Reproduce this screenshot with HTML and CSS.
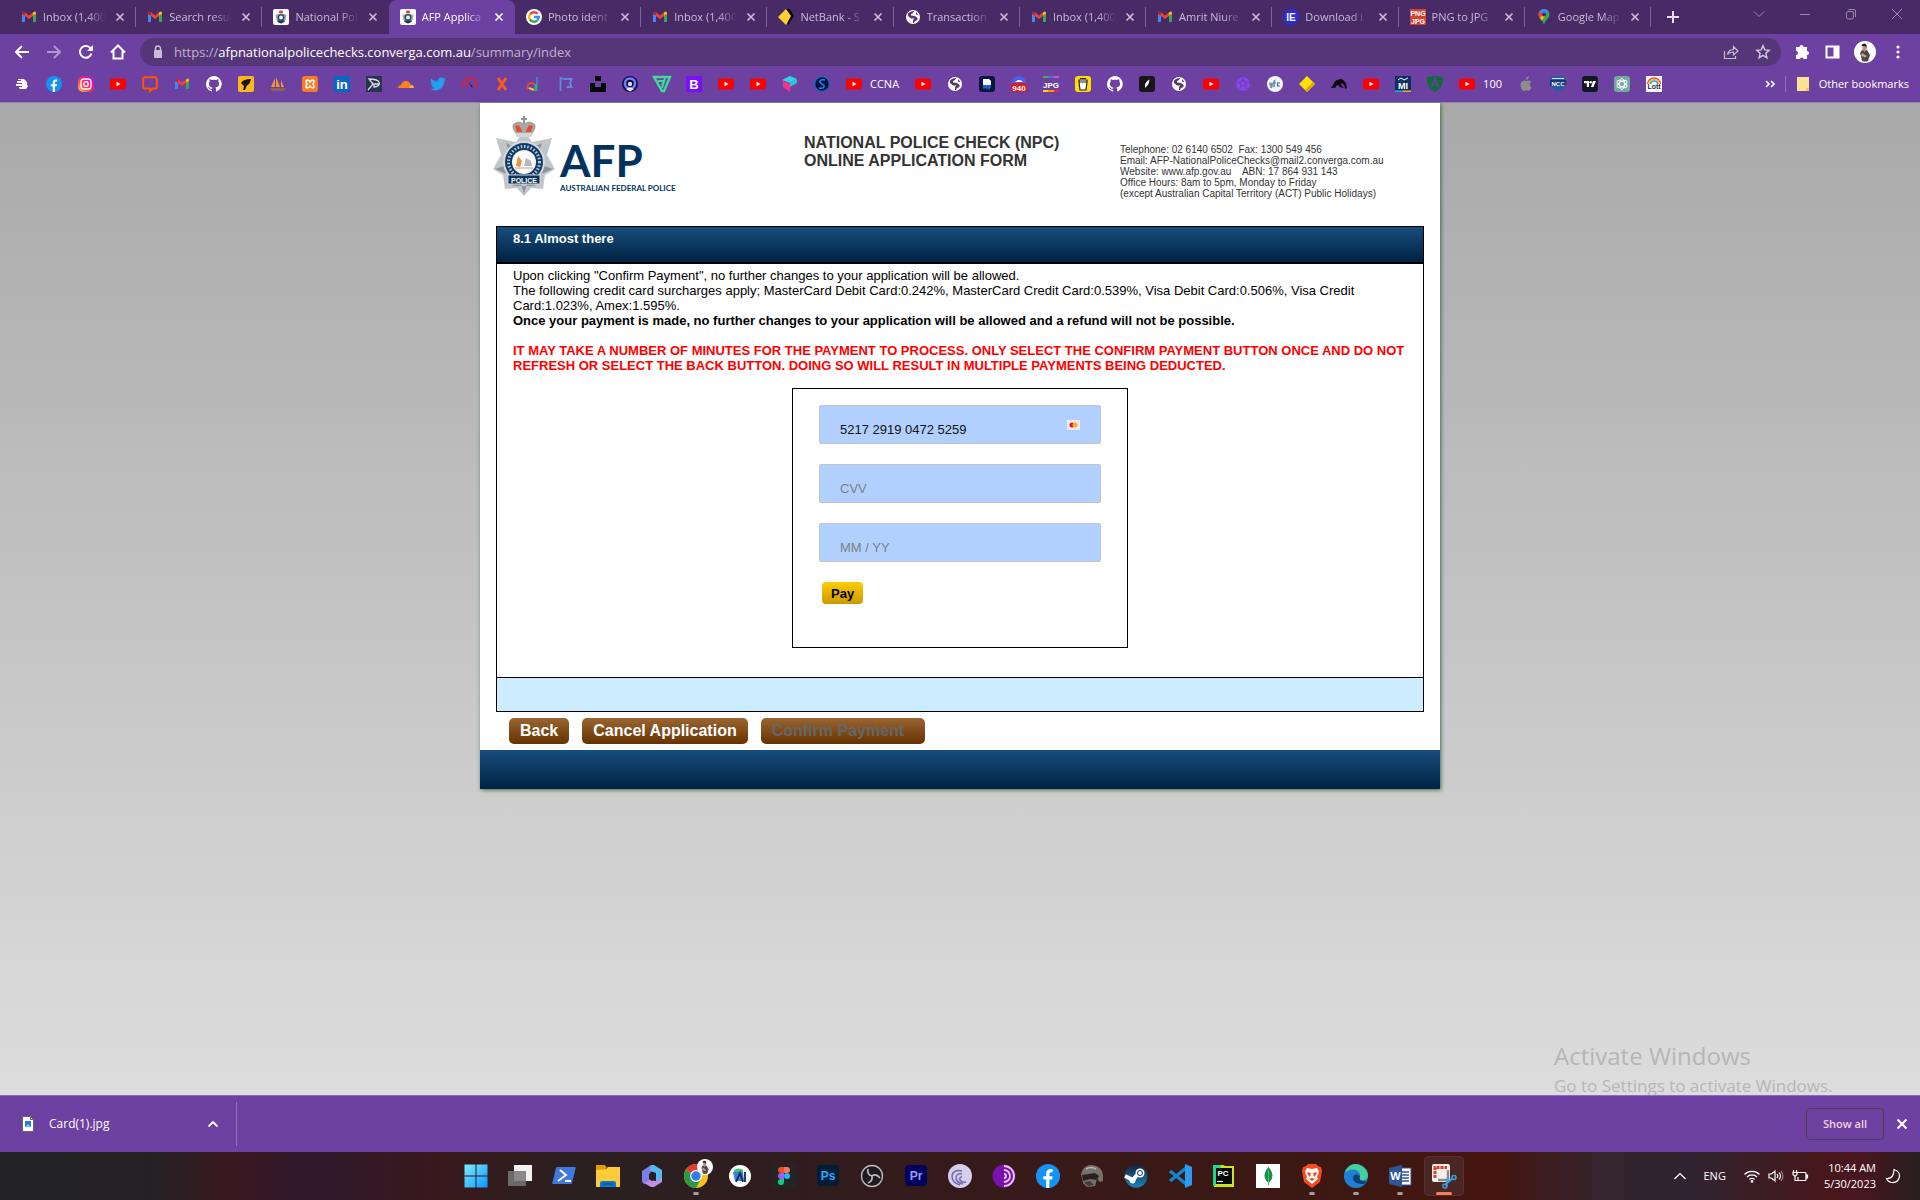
FILE: index.html
```html
<!DOCTYPE html>
<html lang="en">
<head>
<meta charset="utf-8">
<title>AFP Application Form</title>
<link rel="stylesheet" href="styles.css">
</head>
<body>
<svg class="defs" aria-hidden="true">
  <symbol id="gmail" viewBox="0 0 16 16"><path d="M1 4v9h3V6z" fill="#4285f4"/><path d="M15 4v9h-3V6z" fill="#34a853"/><path d="M12 6.500V3.500l1-.8q2-.9 2 1.300v1z" fill="#fbbc04"/><path d="M4 6.500V3.500l-1-.8q-2-.9-2 1.300v1z" fill="#c5221f"/><path d="M4 3.300l4 3.100 4-3.100v3.800l-4 3-4-3z" fill="#ea4335"/></symbol>
  <symbol id="youtube" viewBox="0 0 16 16"><rect y="2.500" width="16" height="11" rx="2" fill="#f00"/><path d="M6.500 5.700v4.600l4-2.300z" fill="#fff"/></symbol>
  <symbol id="github" viewBox="0 0 16 16"><path fill="#fff" d="M8 0a8 8 0 0 0-2.500 15.600c.4.100.5-.2.500-.4v-1.500c-2.200.5-2.700-.9-2.700-.9-.4-.9-.9-1.200-.9-1.200-.7-.5.100-.5.100-.5.800.100 1.200.8 1.200.8.700 1.200 1.900.9 2.300.7.100-.5.300-.9.500-1.100-1.800-.2-3.600-.9-3.600-4 0-.9.300-1.600.8-2.100-.1-.2-.4-1 .1-2.100 0 0 .7-.2 2.200.8a7.500 7.500 0 0 1 4 0c1.500-1 2.200-.8 2.200-.8.400 1.100.200 1.900.100 2.100.5.600.8 1.300.8 2.100 0 3.100-1.900 3.700-3.700 3.900.3.300.6.800.6 1.500v2.200c0 .200.100.500.500.400A8 8 0 0 0 8 0z"/></symbol>
  <symbol id="globe" viewBox="0 0 16 16"><circle cx="8" cy="8" r="7" fill="#fff"/><path d="M3 4.500q3-3 6-2.500l-1 2-2 1v1.500l4 .5 2.500 2v2L10 12l-1 2H8v-3l1.500-1.500H6L3 7zM11 3l2.500 3-2.500-.5z" fill="#55367a"/></symbol>
  <symbol id="crest" viewBox="0 0 16 16"><rect width="16" height="16" rx="2" fill="#fff"/><path d="M2.500 6l2.500-1h6l2.500 1-1 5L11 13H5l-1.500-2z" fill="#9aa3aa"/><rect x="6" y="1.500" width="4" height="3" rx="1" fill="#c55244"/><circle cx="8" cy="8.500" r="3.300" fill="#24456c"/><circle cx="8" cy="8.500" r="2" fill="#eee"/><path d="M4.500 11.500h7v1.500l-3.500 1.500L4.500 13z" fill="#1b3555"/></symbol>
  <symbol id="x" viewBox="0 0 16 16"><path d="M4.500 4.500l7 7m0-7l-7 7" stroke="currentColor" stroke-width="1.700" fill="none"/></symbol>
  <symbol id="facebook" viewBox="0 0 24 24"><circle cx="12" cy="12" r="12" fill="#1593f5"/><path d="M10.200 24v-8.500H7.300v-3.300h2.900V9.600c0-3 1.700-4.500 4.300-4.500 1 0 2.200.2 2.200.2v2.900h-1.400c-1.400 0-1.900.8-1.900 1.700v2.300h3.200l-.5 3.300h-2.700V24z" fill="#fff"/></symbol>
  <symbol id="avatar" viewBox="0 0 22 22"><circle cx="11" cy="11" r="11" fill="#fff"/><path d="M8 9l5 0 3 5-2 6q-3 1-6 0l-1-5-1-3z" fill="#4e4848"/><path d="M8.500 5h4v4l-2 2-2-2z" fill="#c48c7c"/><path d="M7.500 4q3-3 5 0v3l-1.500-2H8z" fill="#1b1718"/><path d="M8 12l5 3-2 1.500-4-2z" fill="#d39d8c"/></symbol>
</svg>

<header class="browser">
  <div class="tabstrip">
    <div class="tabs" role="tablist">
      <div class="tab" role="tab"><svg class="i16"><use href="#gmail"/></svg><span>Inbox (1,400</span><button aria-label="Close"><svg class="i16"><use href="#x"/></svg></button></div>
      <div class="tab" role="tab"><svg class="i16"><use href="#gmail"/></svg><span>Search resul</span><button aria-label="Close"><svg class="i16"><use href="#x"/></svg></button></div>
      <div class="tab before" role="tab"><svg class="i16"><use href="#crest"/></svg><span>National Pol</span><button aria-label="Close"><svg class="i16"><use href="#x"/></svg></button></div>
      <div class="tab active" role="tab" aria-selected="true"><svg class="i16"><use href="#crest"/></svg><span>AFP Applica</span><button aria-label="Close"><svg class="i16"><use href="#x"/></svg></button></div>
      <div class="tab" role="tab"><svg class="i16" viewBox="0 0 16 16"><circle cx="8" cy="8" r="8" fill="#fff"/><g fill="none" stroke-width="2.400"><path d="M4 5.500A4.700 4.700 0 0 1 11.500 4.700" stroke="#ea4335"/><path d="M4 5.400a4.700 4.700 0 0 0 0 5.200" stroke="#fbbc04"/><path d="M4 10.500a4.700 4.700 0 0 0 7.300 .8" stroke="#34a853"/><path d="M11.300 11.300A4.700 4.700 0 0 0 12.700 8H8" stroke="#4285f4"/></g></svg><span>Photo ident</span><button aria-label="Close"><svg class="i16"><use href="#x"/></svg></button></div>
      <div class="tab" role="tab"><svg class="i16"><use href="#gmail"/></svg><span>Inbox (1,400</span><button aria-label="Close"><svg class="i16"><use href="#x"/></svg></button></div>
      <div class="tab" role="tab"><svg class="i16" viewBox="0 0 16 16"><path d="M8 0l4 0 4 7-6 9z" fill="#0a0a0a"/><path d="M8 0l5 7-5 9-8-8z" fill="#fdcf2f"/></svg><span>NetBank - S</span><button aria-label="Close"><svg class="i16"><use href="#x"/></svg></button></div>
      <div class="tab" role="tab"><svg class="i16"><use href="#globe"/></svg><span>Transaction</span><button aria-label="Close"><svg class="i16"><use href="#x"/></svg></button></div>
      <div class="tab" role="tab"><svg class="i16"><use href="#gmail"/></svg><span>Inbox (1,400</span><button aria-label="Close"><svg class="i16"><use href="#x"/></svg></button></div>
      <div class="tab" role="tab"><svg class="i16"><use href="#gmail"/></svg><span>Amrit Niure</span><button aria-label="Close"><svg class="i16"><use href="#x"/></svg></button></div>
      <div class="tab" role="tab"><svg class="i16" viewBox="0 0 16 16"><circle cx="8" cy="8" r="8" fill="#2a2bd0"/><text x="8" y="12" text-anchor="middle" class="glyph" font-size="10" fill="#fff">IE</text></svg><span>Download i</span><button aria-label="Close"><svg class="i16"><use href="#x"/></svg></button></div>
      <div class="tab" role="tab"><svg class="i16" viewBox="0 0 16 16"><rect width="16" height="16" fill="#d3412f"/><text x="8" y="7" text-anchor="middle" class="glyph" font-size="7" fill="#fff">PNG</text><text x="8" y="15" text-anchor="middle" class="glyph" font-size="7" fill="#fff">JPG</text></svg><span>PNG to JPG</span><button aria-label="Close"><svg class="i16"><use href="#x"/></svg></button></div>
      <div class="tab" role="tab"><svg class="i16" viewBox="0 0 16 16"><path d="M8 0a5.500 5.500 0 0 0-5.500 5.500C2.500 10 7 10.500 8 16c1-5.500 5.500-6 5.500-10.500A5.500 5.500 0 0 0 8 0z" fill="#34a853"/><path d="M3.200 8.500L12.500 2.500A5.500 5.500 0 0 0 3 3z" fill="#4285f4"/><path d="M3.500 2.500L7 5.500 4 9q-3-3-.5-6.500z" fill="#ea4335"/><path d="M4 9l3-3.500 2 2-3.500 4z" fill="#fbbc04"/><circle cx="8" cy="5.500" r="2" fill="#472a66"/></svg><span>Google Map</span><button aria-label="Close"><svg class="i16"><use href="#x"/></svg></button></div>
    </div>
    <button class="newtab" aria-label="New tab"><svg class="i16" viewBox="0 0 16 16"><path d="M8 2v12M2 8h12" stroke="#e8e0ef" stroke-width="2"/></svg></button>
    <div class="winctl">
      <button aria-label="Search tabs"><svg class="i16" viewBox="0 0 16 16"><path d="M3 5.500l5 5 5-5"/></svg></button>
      <button aria-label="Minimise"><svg class="i16" viewBox="0 0 16 16"><path d="M3 8.500h10"/></svg></button>
      <button aria-label="Restore"><svg class="i16" viewBox="0 0 16 16"><rect x="3.500" y="5.500" width="7" height="7.500" rx="1.500"/><path d="M5.500 3.500H11q1.500 0 1.500 1.500v6"/></svg></button>
      <button aria-label="Close window"><svg class="i16" viewBox="0 0 16 16"><path d="M3 3l10 10M13 3L3 13"/></svg></button>
    </div>
  </div>

  <div class="toolbar">
    <button aria-label="Back"><svg class="i16" viewBox="0 0 16 16"><path d="M15 8H2M8 2L2 8l6 6" class="stroke"/></svg></button>
    <button aria-label="Forward" class="dim"><svg class="i16" viewBox="0 0 16 16"><path d="M1 8h13M8 2l6 6-6 6" class="stroke"/></svg></button>
    <button aria-label="Reload"><svg class="i16" viewBox="0 0 16 16"><path d="M13.500 9.500A5.900 5.900 0 1 1 12 3.700L14 5.500" class="stroke"/><path d="M15 1v6H9z" fill="#fff"/></svg></button>
    <button aria-label="Home"><svg class="i16" viewBox="0 0 16 16"><path d="M1 8.500L8 1.500l7 7M3.500 7v7.500h9V7" class="stroke"/></svg></button>
    <div class="omnibox">
      <svg class="i16" viewBox="0 0 16 16"><rect x="4" y="6" width="8" height="8" rx="1" fill="#c9bdd4"/><path d="M5.500 6V4.500a2.500 2.500 0 0 1 5 0V6" stroke="#c9bdd4" stroke-width="1.500" fill="none"/></svg>
      <span class="url">https://<b>afpnationalpolicechecks.converga.com.au</b>/summary/index</span>
      <button aria-label="Share"><svg class="i16" viewBox="0 0 16 16"><path d="M1.500 7v7.500h11V12M4.500 10.500q1-5 6-5V2.500l4.500 4.500-4.500 4V8q-4 0-6 2.500z" fill="none" stroke="#c9bdd4" stroke-width="1.200"/></svg></button>
      <button aria-label="Bookmark"><svg class="i16" viewBox="0 0 16 16"><path d="M8 1.800l1.800 4.100 4.400.4-3.300 3 1 4.400L8 11.400l-3.900 2.300 1-4.400-3.300-3 4.400-.4z" fill="none" stroke="#d5cbe0" stroke-width="1.400"/></svg></button>
    </div>
    <div class="tools">
      <button aria-label="Extensions"><svg class="i16" viewBox="0 0 16 16"><path d="M5.500 3a2 2 0 0 1 4 0h3.500v4a2 2 0 0 1 0 4v4H9.500a1.800 1.800 0 0 0-3.500 0H2v-4a2 2 0 0 0 0-4V3z" fill="#fff"/></svg></button>
      <button aria-label="Side panel"><svg class="i16" viewBox="0 0 16 16"><path d="M1.500 1.500h14v13h-14zM3.500 3.500v9h6v-9z" fill="#fff" fill-rule="evenodd"/></svg></button>
      <button aria-label="Profile"><svg class="i22"><use href="#avatar"/></svg></button>
      <button aria-label="Menu"><svg class="i16" viewBox="0 0 16 16"><g fill="#fff"><circle cx="8" cy="3" r="1.600"/><circle cx="8" cy="8" r="1.600"/><circle cx="8" cy="13" r="1.600"/></g></svg></button>
    </div>
  </div>

  <nav class="bookmarks" aria-label="Bookmarks">
    <a href="#"><svg class="i16" viewBox="0 0 16 16"><path d="M4 3h6l3 3v3l1 1-2 3H6l-1-1V11h3v-1H2V8h6V7H3V5h4V4H4z" fill="#fff"/></svg></a>
    <a href="#"><svg class="i16"><use href="#facebook"/></svg></a>
    <a href="#"><svg class="i16" viewBox="0 0 16 16"><defs><linearGradient id="ig" x1="0" y1="1" x2="1" y2="0"><stop offset="0" stop-color="#ffd04a"/><stop offset=".4" stop-color="#fb3c4c"/><stop offset=".7" stop-color="#e30fa5"/><stop offset="1" stop-color="#8a2cf0"/></linearGradient></defs><rect width="16" height="16" rx="5" fill="url(#ig)"/><g fill="none" stroke="#fff" stroke-width="1.300"><rect x="3" y="3" width="10" height="10" rx="3"/><circle cx="8" cy="8" r="2.300"/></g></svg></a>
    <a href="#"><svg class="i16"><use href="#youtube"/></svg></a>
    <a href="#"><svg class="i16" viewBox="0 0 16 16"><path d="M3 1.200h10q1.800 0 1.800 1.800v8q0 1.500-1.800 1.500h-2L8 15v-2.500H3q-1.800 0-1.800-1.500V3Q1.200 1.200 3 1.200z" fill="none" stroke="#ff5400" stroke-width="2"/></svg></a>
    <a href="#"><svg class="i16"><use href="#gmail"/></svg></a>
    <a href="#"><svg class="i16"><use href="#github"/></svg></a>
    <a href="#"><svg class="i16" viewBox="0 0 16 16"><rect width="16" height="16" rx="2" fill="#fdb913"/><path d="M3 7q2-4 10-4-1 5-4 6.500L7 14H5l1-4z" fill="#1b1710"/></svg></a>
    <a href="#"><svg class="i16" viewBox="0 0 16 16"><path d="M1 11L5 2v9zM6 11V1l4 10zM11 11V4l3 7z" fill="#f59331"/><path d="M0 12h16l-2 3H2z" fill="#8a6257"/></svg></a>
    <a href="#"><svg class="i16" viewBox="0 0 16 16"><rect width="16" height="16" rx="3" fill="#fb7a24"/><path d="M5 4q2 0 3 2 1-2 3-2 2 1 0 4 2 3 0 4-2 0-3-2-1 2-3 2-2-1 0-4-2-3 0-4z" fill="none" stroke="#fff" stroke-width="1.600"/></svg></a>
    <a href="#"><svg class="i16" viewBox="0 0 16 16"><rect width="16" height="16" rx="1" fill="#0a66c2"/><text x="8" y="13" text-anchor="middle" class="glyph" font-size="13" fill="#fff">in</text></svg></a>
    <a href="#"><svg class="i16" viewBox="0 0 16 16"><rect width="16" height="16" fill="#2a3350"/><path d="M2 14L7 8 3 3q8 0 10 3 2 4-5 5V8h5" fill="none" stroke="#d8dde6" stroke-width="1.300"/></svg></a>
    <a href="#"><svg class="i16" viewBox="0 0 16 16"><path d="M0 12q0-3 3-3 1-4 5-4 4 0 4 3.500 3.500 0 4 3.500z" fill="#f6821f"/><path d="M11 12l1.500-3q3 0 3.500 3z" fill="#fbad41"/></svg></a>
    <a href="#"><svg class="i16" viewBox="0 0 16 16"><path fill="#1da1f2" d="M16 3.500l-1.700 1.600C14.400 11 9.500 14.500 5 14.500c-1.800 0-3.500-.5-5-1.400 1.700.2 3.400-.3 4.700-1.300-1.400 0-2.500-1-3-2.300h1.400C1.500 9 .6 7.700.6 6.200l1.400.4C.6 5.600.2 3.700 1.100 2.200a9.300 9.300 0 0 0 6.800 3.400C7.300 3.300 9 1.500 11 1.500c1 0 1.800.4 2.400 1l2.100-.8-1.400 1.900z"/></svg></a>
    <a href="#"><svg class="i16" viewBox="0 0 16 16"><path d="M2 12a6.800 6.800 0 1 1 12 0M5 11a3.500 3.500 0 0 1 3-5" fill="none" stroke="#e21b2c" stroke-width="1.500"/><path d="M7 6l4 5H9z" fill="#2b1b36"/></svg></a>
    <a href="#"><svg class="i16" viewBox="0 0 16 16"><path d="M4 2l8 12M12 2L4 14" stroke="#fb5b1e" stroke-width="3"/></svg></a>
    <a href="#"><svg class="i16" viewBox="0 0 16 16"><path d="M2 13a4 4 0 1 1 7-4" fill="none" stroke="#f0462f" stroke-width="2"/><path d="M10 15V8" stroke="#24b47e" stroke-width="3"/><path d="M11 8V1" stroke="#3b7fe0" stroke-width="2"/><path d="M3 12l5 2" stroke="#f8c12c" stroke-width="2"/></svg></a>
    <a href="#"><svg class="i16" viewBox="0 0 16 16"><path d="M2.500 15V2l4 1h7l-1.500 4 1.500 4h-5" fill="none" stroke="#5e8bdc" stroke-width="1.800"/></svg></a>
    <a href="#"><svg class="i16" viewBox="0 0 16 16"><path d="M0 7h5v4h6V7h5v9H0zM5 0h6v5H5z" fill="#050505"/></svg></a>
    <a href="#"><svg class="i16" viewBox="0 0 16 16"><circle cx="8" cy="8" r="8" fill="#17154a"/><circle cx="8" cy="7.500" r="5" fill="#0c0a2a" stroke="#7380ff" stroke-width="2.500"/><circle cx="8" cy="8" r="2.200" fill="#d9dcff"/><path d="M4 13q4-3 8 0l-4 2.500z" fill="#e8e9ff"/></svg></a>
    <a href="#"><svg class="i16" viewBox="0 0 16 16"><path d="M0 1h16l-6 14H8z" fill="none" stroke="#3ddc97" stroke-width="2.400"/><path d="M4 5h6L8 9M11 2L8 12" fill="none" stroke="#3ddc97" stroke-width="2"/></svg></a>
    <a href="#"><svg class="i16" viewBox="0 0 16 16"><rect width="16" height="16" rx="1" fill="#7a0ffb"/><text x="8" y="13" text-anchor="middle" class="glyph" font-size="13" fill="#fff">B</text></svg></a>
    <a href="#"><svg class="i16"><use href="#youtube"/></svg></a>
    <a href="#"><svg class="i16"><use href="#youtube"/></svg></a>
    <a href="#"><svg class="i16" viewBox="0 0 16 16"><path d="M0 4l8-4 7 3-7 4z" fill="#2ed5e6"/><path d="M1 5l7 3v8l-7-5z" fill="#ff2e8a"/><path d="M8 7l7-4v4l-7 4z" fill="#31c1d8"/></svg></a>
    <a href="#"><svg class="i16" viewBox="0 0 16 16"><circle cx="8" cy="8" r="7.300" fill="#03123d" stroke="#0b6ec9" stroke-width="1.200"/><path d="M11 4Q5 3 6 6.500l4 3Q11 13 5 12" stroke="#1e8be0" stroke-width="1.500" fill="none"/></svg></a>
    <a href="#"><svg class="i16"><use href="#youtube"/></svg>CCNA</a>
    <a href="#"><svg class="i16"><use href="#youtube"/></svg></a>
    <a href="#"><svg class="i16"><use href="#globe"/></svg></a>
    <a href="#"><svg class="i16" viewBox="0 0 16 16"><rect width="16" height="16" rx="3" fill="#07173f"/><path d="M4 3h6l2 2v4H4z" fill="#fff"/><path d="M4 9h8v2l-2 3-1-2-1 2-1-2-3 1z" fill="#1d63c7"/></svg></a>
    <a href="#"><svg class="i16" viewBox="0 0 16 16"><circle cx="8" cy="7.500" r="7.500" fill="#4f5cf0"/><path d="M4 6q4-4 8 0z" fill="#fff"/><rect y="7" width="16" height="9" rx="3" fill="#e3171b"/><text x="8" y="14.500" text-anchor="middle" class="glyph" font-size="8" fill="#fff">940</text></svg></a>
    <a href="#"><svg class="i16" viewBox="0 0 16 16"><path d="M0 1h5" stroke="#4ca64c" stroke-width="2"/><path d="M5 1h6" stroke="#4b70dc" stroke-width="2"/><path d="M11 1h5" stroke="#d24ad6" stroke-width="2"/><path d="M0 15h5" stroke="#ffd400" stroke-width="2"/><path d="M5 15h6" stroke="#ff9600" stroke-width="2"/><path d="M11 15h5" stroke="#f02828" stroke-width="2"/><text x="8" y="11.500" text-anchor="middle" class="glyph" font-size="8" fill="#fff">JPG</text></svg></a>
    <a href="#"><svg class="i16" viewBox="0 0 16 16"><rect width="16" height="16" rx="3" fill="#fd0"/><path d="M4 4h8v2l-1 8H5L4 6zM5 2.500h6" fill="#fff" stroke="#222" stroke-width="1.200"/><path d="M4 6h8" stroke="#222"/></svg></a>
    <a href="#"><svg class="i16"><use href="#github"/></svg></a>
    <a href="#"><svg class="i16" viewBox="0 0 16 16"><rect width="16" height="16" rx="3" fill="#161616"/><path d="M10.500 3.500Q5 6 6 12l1-1q3-2 3.500-7.500z" fill="#fff"/></svg></a>
    <a href="#"><svg class="i16"><use href="#globe"/></svg></a>
    <a href="#"><svg class="i16"><use href="#youtube"/></svg></a>
    <a href="#"><svg class="i16" viewBox="0 0 16 16"><circle cx="8" cy="8" r="7" fill="#8a44f5"/><path d="M8 1v3l3 2.500L10 10H6L5 6.500 8 4M5 6.500L1.500 7M11 6.500l3.500.5M6 10l-2 3M10 10l2 3" fill="none" stroke="#6d41a1" stroke-width="1.200"/></svg></a>
    <a href="#"><svg class="i16" viewBox="0 0 16 16"><circle cx="8" cy="8" r="8" fill="#f2f4f6"/><path d="M3 6.500v2.500h2V6.500v4q-1 1-2 .5M8.500 4Q7 4 7 6v5M6 7h3M13 7h-2.500v3H13" stroke="#47708c" stroke-width="1.200" fill="none"/></svg></a>
    <a href="#"><svg class="i16" viewBox="0 0 16 16"><path d="M8 0l8 8-8 8-8-8z" fill="#ffe100"/><path d="M14 6l2 2-8 8-2-2z" fill="#e2a800"/></svg></a>
    <a href="#"><svg class="i16" viewBox="0 0 16 16"><path d="M2 9Q4 3 10 3q5 1 6 9l-2 1q0-5-4-6 0 3 3 5-4 0-6-3-2 0-3 3H0q1-3 3-3.500z" fill="#0c0912"/></svg></a>
    <a href="#"><svg class="i16"><use href="#youtube"/></svg></a>
    <a href="#"><svg class="i16" viewBox="0 0 16 16"><rect width="16" height="16" fill="#0d3060"/><path d="M3 4l3-2 3 2 4-2" stroke="#fff" fill="none"/><text x="8" y="13" text-anchor="middle" class="glyph" font-size="9" fill="#fff">MI</text><path d="M0 15.200h8" stroke="#25a9d8" stroke-width="1.600"/><path d="M8 15.200h8" stroke="#f5a623" stroke-width="1.600"/></svg></a>
    <a href="#"><svg class="i16" viewBox="0 0 16 16"><path d="M0 1l8-1 8 1q1 10-8 15Q-1 11 0 1z" fill="#0f6a3c"/><path d="M4.500 11L8 3l3.500 8M6 8.500h4" stroke="#6c3d9b" stroke-width="1.600" fill="none"/></svg></a>
    <a href="#"><svg class="i16"><use href="#youtube"/></svg>100</a>
    <a href="#"><svg class="i16" viewBox="0 0 16 16"><path d="M13.500 11.500Q12 15 10.500 15 9 14.300 8 14.300T5.500 15Q3 14 2.500 9 2.500 5 6 4.500q1 0 2 .5 1-.5 2.500-.5 2 0 2.800 1.300-3 2.700.2 5.700zM8 4q0-3 2.800-4 0 3-2.800 4z" fill="#8d8d8d"/></svg></a>
    <a href="#"><svg class="i16" viewBox="0 0 16 16"><path d="M0 2l8-2 8 2q0 10-8 14Q0 12 0 2z" fill="#1f5fa8"/><rect y="4" width="16" height="6" fill="#133a72"/><path d="M2 2.500h12" stroke="#cfe1f4"/><text x="8" y="9.500" text-anchor="middle" class="glyph" font-size="6" fill="#fff">NCC</text></svg></a>
    <a href="#"><svg class="i16" viewBox="0 0 16 16"><rect width="16" height="16" rx="3" fill="#131722"/><path d="M2 5h5v6H4.800V7.300H2zM11 5h3l-2.500 6H9z" fill="#fff"/><circle cx="8.700" cy="6.200" r="1.200" fill="#fff"/></svg></a>
    <a href="#"><svg class="i16" viewBox="0 0 16 16"><rect width="16" height="16" rx="3" fill="#74aa9c"/><g fill="none" stroke="#fff" stroke-width=".9"><ellipse cx="8" cy="8" rx="2.500" ry="5.500"/><ellipse cx="8" cy="8" rx="2.500" ry="5.500" transform="rotate(60 8 8)"/><ellipse cx="8" cy="8" rx="2.500" ry="5.500" transform="rotate(120 8 8)"/></g></svg></a>
    <a href="#"><svg class="i16" viewBox="0 0 16 16"><rect width="16" height="16" fill="#fff"/><path d="M1.500 8a6.500 6 0 0 1 13 0" fill="none" stroke="#f04a3c" stroke-width="1.500"/><path d="M3 8a5 4.500 0 0 1 10 0" fill="none" stroke="#f8c12c" stroke-width="1.500"/><path d="M4.500 8a3.500 3 0 0 1 7 0" fill="none" stroke="#34a0dc" stroke-width="1.500"/><text x="8" y="13" text-anchor="middle" class="glyph" font-size="7" fill="#14284f">Lott</text></svg></a>
    <button class="more" aria-label="More bookmarks"><svg class="i16" viewBox="0 0 16 16"><path d="M4 5l3 3-3 3M9 5l3 3-3 3" fill="none" stroke="#fff" stroke-width="1.600"/></svg></button>
    <a href="#" class="other"><svg class="i16" viewBox="0 0 16 16"><path d="M2 1h12v14H2z" fill="#fde293"/><path d="M11 15v-3h3v3z" fill="#f6c944"/></svg>Other bookmarks</a>
  </nav>
</header>

<main class="page">
  <div class="sheet">
    <div class="masthead">
      <svg class="logo" viewBox="0 0 180 82" role="img" aria-label="AFP Australian Federal Police">
        <path d="M32 14l8 12 20-4-5 17 8 14-10 6-2 14-12-1-7 8-7-8-12 1-2-14-10-6 8-14-5-17 20 4z" fill="#c3c6c9"/>
        <path d="M14 27l12 6-8 6zM50 27l-12 6 8 6zM3 53l14-5-2 10zM61 53l-14-5 2 10zM20 70l8-6 4 14 4-14 8 6" fill="#8f9498"/>
        <path d="M32 0v8M29 3h6" stroke="#8f9295" stroke-width="2"/>
        <path d="M21 8q6-5 11 0 5-5 11 0 2 4-3 10H24q-5-6-3-10z" fill="#a9a5a3"/>
        <path d="M23 10q5-3 7 6h-5zM41 10q-5-3-7 6h5z" fill="#e04e30"/>
        <rect x="24" y="17" width="16" height="4" rx="1" fill="#d5d5d5"/>
        <circle cx="32" cy="46" r="21" fill="#d6dadd"/><circle cx="32" cy="46" r="19" fill="#123d68"/><circle cx="32" cy="46" r="12" fill="#fafafa"/>
        <circle cx="32" cy="46" r="15.500" fill="none" stroke="#b8c8d6" stroke-width="3" stroke-dasharray="1.500 1.800"/>
        <path d="M24 50l2-10 4 5-2 6z" fill="#e3954f"/><path d="M32 50l2-8 5 3 1 5z" fill="#b4b8bb"/><path d="M23 52h18" stroke="#c9a46f"/>
        <path d="M16 59h32v9H16z" fill="#0d355f" stroke="#cdd3d8"/>
        <text x="32" y="66.500" text-anchor="middle" class="glyph" font-size="7" fill="#fff">POLICE</text>
        <text x="68" y="61" class="afp" font-size="44">AFP</text>
        <text x="68" y="75" class="afp" font-size="8">AUSTRALIAN FEDERAL POLICE</text>
      </svg>
      <h1>NATIONAL POLICE CHECK (NPC)<br>ONLINE APPLICATION FORM</h1>
      <address>Telephone: 02 6140 6502&nbsp; Fax: 1300 549 456<br>Email: AFP-NationalPoliceChecks@mail2.converga.com.au<br>Website: www.afp.gov.au&nbsp;&nbsp;&nbsp; ABN: 17 864 931 143<br>Office Hours: 8am to 5pm, Monday to Friday<br>(except Australian Capital Territory (ACT) Public Holidays)</address>
    </div>
    <section class="panel">
      <h2>8.1 Almost there</h2>
      <div class="panel-body">
        <p>Upon clicking "Confirm Payment", no further changes to your application will be allowed.<br>The following credit card surcharges apply; MasterCard Debit Card:0.242%, MasterCard Credit Card:0.539%, Visa Debit Card:0.506%, Visa Credit Card:1.023%, Amex:1.595%.<br><b>Once your payment is made, no further changes to your application will be allowed and a refund will not be possible.</b></p>
        <p class="warning">IT MAY TAKE A NUMBER OF MINUTES FOR THE PAYMENT TO PROCESS. ONLY SELECT THE CONFIRM PAYMENT BUTTON ONCE AND DO NOT REFRESH OR SELECT THE BACK BUTTON. DOING SO WILL RESULT IN MULTIPLE PAYMENTS BEING DEDUCTED.</p>
        <form class="card">
          <div class="field"><input type="text" aria-label="Card number" value="5217 2919 0472 5259"><svg class="brand" viewBox="0 0 13 10"><rect width="13" height="10" fill="#eee9ee"/><circle cx="5" cy="5" r="2.500" fill="#e5121f"/><circle cx="8" cy="5" r="2.500" fill="#f9b01c"/></svg></div>
          <div class="field"><input type="text" aria-label="CVV" placeholder="CVV"></div>
          <div class="field"><input type="text" aria-label="Expiry date" placeholder="MM / YY"></div>
          <button type="button" class="pay">Pay</button>
        </form>
      </div>
      <div class="panel-foot"></div>
    </section>
    <div class="actions">
      <button>Back</button>
      <button>Cancel Application</button>
      <button class="confirm" disabled>Confirm Payment</button>
    </div>
    <div class="sheet-foot"></div>
  </div>
  <div class="watermark"><strong>Activate Windows</strong><span>Go to Settings to activate Windows.</span></div>
</main>

<section class="downloads" aria-label="Downloads">
  <div class="download">
    <svg class="i16" viewBox="0 0 16 16"><path d="M2.500 .5h8l3 3v12h-11z" fill="#fff" stroke="#6b6660"/><path d="M10.500 .5v3h3" fill="none" stroke="#6b6660"/><rect x="5" y="5" width="6" height="6" fill="#1f7fd6"/><path d="M5 11l3-3 3 3z" fill="#67d0f5"/></svg>
    <span>Card(1).jpg</span>
    <button aria-label="Options"><svg class="i16" viewBox="0 0 16 16"><path d="M3.500 10.500L8 6l4.500 4.500" fill="none" stroke="#fff" stroke-width="1.800"/></svg></button>
  </div>
  <button class="showall">Show all</button>
  <button class="closebar" aria-label="Close downloads"><svg class="i16" viewBox="0 0 16 16"><path d="M3.500 3.500l9 9m0-9l-9 9" stroke="#fff" stroke-width="2"/></svg></button>
</section>

<footer class="taskbar">
  <div class="apps">
    <button aria-label="Start"><svg class="i24" viewBox="0 0 24 24"><defs><linearGradient id="w" x1="0" y1="0" x2="1" y2="1"><stop offset="0" stop-color="#7fedff"/><stop offset="1" stop-color="#0a95ff"/></linearGradient></defs><path d="M.500 .500h11v11h-11zM12.500 .500h11v11h-11zM.500 12.500h11v11h-11zM12.500 12.500h11v11h-11z" fill="url(#w)"/></svg></button>
    <button aria-label="Task view"><svg class="i24" viewBox="0 0 24 24"><rect x="6" y="1" width="18" height="16" fill="#f2f2f2"/><rect y="7" width="18" height="15" fill="#777" fill-opacity=".85"/></svg></button>
    <button aria-label="PowerShell"><svg class="i24" viewBox="0 0 24 24"><path d="M5 3h18q1 0 .7 1L20 19q-.3 1-1 1H1q-1 0-.7-1L4 4q.3-1 1-1z" fill="#4079dd"/><path d="M8 6l6 5-8 6M13 17h6" fill="none" stroke="#fff" stroke-width="2"/></svg></button>
    <button aria-label="File Explorer"><svg class="i24" viewBox="0 0 24 24"><path d="M0 1h9l2 3h-1v3H0z" fill="#e39a05"/><path d="M0 6l10-1 2-2h12v20H0z" fill="#fdcb3c"/><path d="M4 23v-4q0-2 2-2h12q2 0 2 2v4z" fill="#0f77cf"/><path d="M7 20h10" stroke="#0a4a85" stroke-width="1.300"/></svg></button>
    <button aria-label="Microsoft 365"><svg class="i24" viewBox="0 0 24 24"><path d="M2 7l9-6 4 2-5 6v8l-6 3-2-2z" fill="#7b7fe8"/><path d="M11 1h3l8 5v10l-6 1V9l-6-2z" fill="#53b9f0"/><path d="M4 19l6-3 6 1 6-2v3l-8 5h-3z" fill="#c08ce8"/><path d="M12 8l4 2v5l-4 2-3-2v-5z" fill="#2c1f20"/></svg></button>
    <button aria-label="Chrome" class="running"><svg class="i24" viewBox="0 0 24 24"><circle cx="12" cy="12" r="12" fill="#fbc116"/><path d="M12 12L1.600 6A12 12 0 0 1 22.400 6z" fill="#e33b2e"/><path d="M12 12L1.600 6A12 12 0 0 0 12 24l5-9z" fill="#2a9a47"/><circle cx="12" cy="12" r="6" fill="#fff"/><circle cx="12" cy="12" r="4.700" fill="#2f7cee"/></svg><svg class="badge"><use href="#avatar"/></svg></button>
    <button aria-label="Android Studio"><svg class="i24" viewBox="0 0 24 24"><circle cx="12" cy="12" r="11" fill="#fff"/><path d="M6 6q5-3 9 0v4H6z" fill="#36c56b"/><path d="M5 8h10l1 9H7z" fill="#3b7de0"/><path d="M8 18l4-9 3 9M17 8v10" stroke="#122b55" stroke-width="1.800" fill="none"/></svg></button>
    <button aria-label="Figma"><svg class="i24" viewBox="0 0 24 24"><rect width="24" height="24" fill="#242424"/><path d="M12 3H9a3 3 0 0 0 0 6h3z" fill="#f24e1e"/><path d="M12 3h3a3 3 0 0 1 0 6h-3z" fill="#ff7262"/><path d="M12 9H9a3 3 0 0 0 0 6h3z" fill="#a259ff"/><circle cx="15" cy="12" r="3" fill="#1abcfe"/><path d="M12 15H9a3 3 0 1 0 3 3z" fill="#0acf83"/></svg></button>
    <button aria-label="Photoshop"><svg class="i24" viewBox="0 0 24 24"><rect x="1" y="1" width="22" height="21" rx="4" fill="#001e36"/><text x="12" y="16" text-anchor="middle" class="glyph" font-size="12" fill="#31a8ff">Ps</text></svg></button>
    <button aria-label="OBS Studio"><svg class="i24" viewBox="0 0 24 24"><circle cx="12" cy="12" r="10.500" fill="#1d1b1e" stroke="#bdbdbd" stroke-width="1.300"/><path d="M12 12q-5-1-4-7M12 12q4-3 8 2M12 12q1 5-4 7" fill="none" stroke="#bdbdbd" stroke-width="1.700"/></svg></button>
    <button aria-label="Premiere Pro"><svg class="i24" viewBox="0 0 24 24"><rect x="1" y="1" width="22" height="21" rx="4" fill="#00005b"/><text x="12" y="16" text-anchor="middle" class="glyph" font-size="12" fill="#9999ff">Pr</text></svg></button>
    <button aria-label="BitTorrent"><svg class="i24" viewBox="0 0 24 24"><circle cx="12" cy="12" r="12" fill="#d4cfee"/><path d="M14 7Q5 5 4 12q0 7 8 9M14 10q-6-1-6 4 1 5 7 6M14 13q-3 0-2 3 2 3 6 2" fill="none" stroke="#7369ab" stroke-width="1.500"/></svg></button>
    <button aria-label="Tor Browser"><svg class="i24" viewBox="0 0 24 24"><circle cx="12" cy="12" r="11.500" fill="#7a10ae"/><path d="M12 2a10 10 0 0 1 0 20M12 6a6 6 0 0 1 0 12M12 10a2 2 0 0 1 0 4" stroke="#e4c8f2" stroke-width="1.800" fill="none"/></svg></button>
    <button aria-label="Facebook"><svg class="i24"><use href="#facebook"/></svg></button>
    <button aria-label="PUBG"><svg class="i24" viewBox="0 0 24 24"><path d="M1 10Q3 1 12 1q10 1 11 10v6l-3 1-3-3-2 7-8 1-4-4z" fill="#77716c"/><path d="M2 11l13-2 4 3-2 4-7-1-7 2z" fill="#28211f"/><path d="M4 18l6-1 4 4-6 1z" fill="#443b37"/><path d="M6 5q5-3 10 0" stroke="#b9b4ae" stroke-width="1.500" fill="none"/></svg></button>
    <button aria-label="Steam"><svg class="i24" viewBox="0 0 24 24"><defs><linearGradient id="st" x1="0" y1="0" x2="0" y2="1"><stop offset="0" stop-color="#14213f"/><stop offset="1" stop-color="#1883bd"/></linearGradient></defs><circle cx="12" cy="12" r="11.500" fill="url(#st)"/><path d="M1 12l8 4 4-5" stroke="#fff" stroke-width="4" fill="none"/><circle cx="16" cy="9" r="4.500" fill="#fff"/><circle cx="16" cy="9" r="2.500" fill="none" stroke="#14355c"/><circle cx="8.500" cy="16.500" r="3" fill="#fff"/></svg></button>
    <button aria-label="Visual Studio Code"><svg class="i24" viewBox="0 0 24 24"><path d="M2 7l16 13M2 17L18 4" stroke="#1683cc" stroke-width="3.500"/><path d="M17 0l7 3v18l-7 3z" fill="#2a9df0"/></svg></button>
    <button aria-label="PyCharm"><svg class="i24" viewBox="0 0 24 24"><path d="M1 1h10l2 1h9v21H2z" fill="#c9e61c"/><path d="M1 1h8L3 22H1z" fill="#21d789"/><rect x="4" y="4" width="16" height="16" fill="#080808"/><text x="11" y="12" text-anchor="middle" class="glyph" font-size="8" fill="#fff">PC</text><path d="M5 17.500h6" stroke="#fff" stroke-width="1.200"/></svg></button>
    <button aria-label="MongoDB"><svg class="i24" viewBox="0 0 24 24"><rect width="24" height="24" fill="#fff"/><path d="M12.500 3q8 9 0 16-8-7 0-16z" fill="#12924a"/><path d="M12.500 6v15" stroke="#58b370"/></svg></button>
    <button aria-label="Brave" class="running"><svg class="i24" viewBox="0 0 24 24"><path d="M8 0h8l2 2 3 1 1 4-2 11-8 6-8-6L2 7l1-4 3-1z" fill="#fb4a1d"/><path d="M7 4l5 1 5-1 2 4-2 5 1 2-6 5-6-5 1-2-2-5z" fill="#fff"/><path d="M7 8l4 1-1 4-2-2zM17 8l-4 1 1 4 2-2zM9 15l3-1 3 1-3 2z" fill="#fb4a1d"/></svg></button>
    <button aria-label="Edge" class="running"><svg class="i24" viewBox="0 0 24 24"><circle cx="12" cy="12" r="12" fill="#1c84d8"/><path d="M1 8Q6-3 16 1q8 4 8 11-1 5-7 4-3-1-1-4Q16 6 9 6q-5 0-8 4z" fill="#45d0a0"/><path d="M1 9q5-5 11-3 4 2 4 6-4-4-7-1-3 4 1 8 4 4 9 2Q10 27 3 19q-4-5-2-10z" fill="#1d7fd6"/><path d="M16 12q-5-4-7 1-1 7 11 7l1-1q3-2-1-2-6 0-4-5z" fill="#123f72"/></svg></button>
    <button aria-label="Word" class="running"><svg class="i24" viewBox="0 0 24 24"><rect x="12" y="4" width="11" height="17" fill="#fff" stroke="#2b579a"/><path d="M14 8h7M14 11h7M14 14h7M14 17h7" stroke="#2b579a" stroke-width="1.300"/><path d="M1 4l13-3v22L1 20z" fill="#2b579a"/><text x="7.500" y="16" text-anchor="middle" class="glyph" font-size="11" fill="#fff">W</text></svg></button>
    <button aria-label="Snipping Tool" class="running current"><svg class="i24" viewBox="0 0 24 24"><rect width="18" height="18" rx="2" fill="#f2efee"/><path d="M3 14V3.500h12" fill="none" stroke="#d9401f" stroke-width="3" stroke-dasharray="3 1"/><path d="M16 6v10H6" stroke="#8c8c8c" stroke-width="2.500" fill="none"/><path d="M14 20l7-6M16 14l-2 8" stroke="#3a9fe0" stroke-width="2"/><circle cx="13" cy="22" r="2" fill="none" stroke="#3a9fe0" stroke-width="1.500"/><circle cx="22" cy="13.500" r="2" fill="none" stroke="#3a9fe0" stroke-width="1.500"/></svg></button>
  </div>
  <div class="tray">
    <svg class="i16" viewBox="0 0 16 16"><path d="M2.500 11L8 5.500l5.500 5.500" class="line"/></svg>
    <span class="lang">ENG</span>
    <div class="status">
      <svg class="i16" viewBox="0 0 16 16"><path d="M.5 6.500a10.500 10.500 0 0 1 15 0M3 9a7 7 0 0 1 10 0M5.500 11.500a3.500 3.500 0 0 1 5 0" class="line"/><circle cx="8" cy="13.500" r="1.300" fill="#fff"/></svg>
      <svg class="i16" viewBox="0 0 16 16"><path d="M1 6h2.500L7 3v10l-3.500-3H1zM9 6q1.500 2 0 4M11 4.500q3 3.500 0 7" class="line"/><path d="M13 3q4 5 0 10" class="line dim"/></svg>
      <svg class="i16" viewBox="0 0 16 16"><path d="M5 4.500h8q1 0 1 1v6q0 1-1 1H6V9M14.500 7v3h1V7zM1.500 2v2M4.500 2v2M1 4.500h4v2L3.500 8h-1L1 6.500zM3 8v4.500h3" class="line"/></svg>
    </div>
    <div class="clock">10:44 AM<br>5/30/2023</div>
    <svg class="i16" viewBox="0 0 16 16"><path d="M9 1.500q6 2 5.500 7Q13 15 7 14.500 3 14 1.500 10.500 9 11 9 1.500z" class="line"/></svg>
  </div>
</footer>
</body>
</html>
```
FILE: styles.css
```css
* { box-sizing: border-box; }

body {
  margin: 0;
  min-height: 100vh;
  display: flex;
  flex-direction: column;
  font: 11px/16px "Open Sans", "Noto Sans", sans-serif;
  color: #fff;
  background: #6d41a1;
}

button {
  padding: 0;
  border: 0;
  background: none;
  color: inherit;
  font: inherit;
}

svg { display: block; flex: none; overflow: visible; }
.defs { display: none; }
.i16 { width: 16px; height: 16px; }
.i22 { width: 22px; height: 22px; }
.i24 { width: 24px; height: 24px; }
.glyph { font-family: "Liberation Sans", sans-serif; font-weight: 700; }

/* Tab strip */
.tabstrip {
  display: flex;
  height: 34px;
  padding-left: 10px;
  background: #472a66;
}
.tabs { display: flex; flex: 0 1 1641px; min-width: 0; }
.tab {
  flex: 1;
  min-width: 0;
  display: flex;
  align-items: center;
  gap: 6px;
  padding: 0 8px 0 11px;
  position: relative;
  color: #c8bdd3;
}
.tab::after {
  content: "";
  position: absolute;
  right: 0;
  top: 7px;
  height: 20px;
  width: 1px;
  background: #7b649a;
}
.tab.before::after, .tab.active::after { display: none; }
.tab.active {
  color: #fff;
  background: #6d41a1;
  border-radius: 8px 8px 0 0;
}
.tab span {
  flex: 1;
  overflow: hidden;
  white-space: nowrap;
  -webkit-mask-image: linear-gradient(to right, #000 70%, transparent);
  mask-image: linear-gradient(to right, #000 70%, transparent);
}
.newtab { width: 44px; display: grid; place-items: center; }
.winctl { display: flex; margin-left: auto; padding-bottom: 6px; }
.winctl button { width: 46px; display: grid; place-items: center; }
.winctl path, .winctl rect { fill: none; stroke: #9a8aab; stroke-width: 1; }

/* Address bar */
.toolbar {
  display: flex;
  align-items: center;
  gap: 16px;
  height: 36px;
  padding: 0 14px;
}
.stroke { fill: none; stroke: #fff; stroke-width: 2; }
.dim { opacity: .45; }
.omnibox {
  flex: 1;
  display: flex;
  align-items: center;
  gap: 16px;
  height: 28px;
  margin-left: -2px;
  padding: 0 10px;
  border-radius: 14px;
  background: #553678;
}
.url {
  flex: 1;
  margin-left: -8px;
  font-size: 13px;
  line-height: 20px;
  color: #bfb2cc;
}
.url b { font-weight: 400; color: #fff; }
.tools { display: flex; align-items: center; gap: 14px; margin-left: -3px; }

/* Bookmarks */
.bookmarks {
  display: flex;
  align-items: center;
  gap: 16px;
  height: 33px;
  padding: 0 11px 4px 14px;
  border-bottom: 1px solid #9a7cbd;
}
.bookmarks a {
  display: flex;
  align-items: center;
  gap: 8px;
  color: #fff;
  text-decoration: none;
  white-space: nowrap;
}
.more { margin-left: auto; }
.bookmarks .other { padding-left: 9px; margin-left: -9px; border-left: 1px solid #8f6fb5; }

/* Web page */
.page {
  flex: 1;
  position: relative;
  font: 13px/15px "Liberation Sans", Arial, sans-serif;
  color: #000;
  background: linear-gradient(#a9a9a9, #ddd);
}
.sheet {
  width: 100%;
  max-width: 960px;
  margin: 0 auto;
  background: #fff;
  box-shadow: 1px 1px 4px #3f6b3f;
}
.masthead {
  display: grid;
  grid-template-columns: 312px 316px 1fr;
  height: 123px;
  padding-left: 12px;
  color: #333;
}
.logo { width: 180px; height: 82px; margin-top: 13px; }
.afp {
  font-family: "Lato", "Liberation Sans", sans-serif;
  font-weight: 700;
  fill: #03325f;
}
h1 { margin: 31px 0 0; font-size: 16px; line-height: 18px; }
address { margin-top: 41px; font-size: 10px; line-height: 11px; font-style: normal; }

.panel { margin: 0 16px; border: 1px solid #000; }
h2 {
  height: 37px;
  margin: 0;
  padding: 4px 16px;
  border-bottom: 2px solid #000;
  font-size: 13px;
  line-height: 15px;
  color: #fff;
  background: linear-gradient(#174d7c, #002244);
}
.panel-body { padding: 4px 0 29px 16px; }
.panel-body p { margin: 0 8px 15px 0; }
.warning { color: #f00; font-weight: 700; }
.card {
  width: 336px;
  height: 260px;
  margin: 0 auto;
  padding: 16px 26px;
  border: 1px solid #000;
}
.panel-body .card { transform: none; margin-left: calc(50% - 176px); }
.field { position: relative; margin-bottom: 20px; }
.field input {
  display: block;
  width: 100%;
  height: 39px;
  padding: 9px 20px 0;
  border: 1px solid #c4c4c4;
  border-radius: 2px;
  font: 13px/15px "Liberation Sans", Arial, sans-serif;
  color: #111;
  background: #b1d0ff;
}
.field input::placeholder { color: #7f7f7f; }
.brand { position: absolute; right: 21px; top: 15px; width: 13px; height: 10px; }
.pay {
  display: block;
  height: 22px;
  margin-left: 3px;
  padding: 0 9px;
  border-radius: 4px;
  font-weight: 700;
  background: linear-gradient(#ffcc00, #cc9900);
}
.panel-foot { height: 34px; border-top: 1px solid #000; background: #ccedff; }

.actions { display: flex; gap: 13px; padding: 6px 29px; }
.actions button {
  height: 26px;
  padding: 0 11px;
  border-radius: 5px;
  font-size: 16px;
  line-height: 18px;
  font-weight: 700;
  color: #fff;
  background: linear-gradient(#996633, #663300);
}
.actions .confirm { padding-right: 21px; color: #666; }
.sheet-foot { height: 39px; background: linear-gradient(#174d7c, #002244); }

.watermark {
  position: absolute;
  right: 82px;
  bottom: -4px;
  display: flex;
  flex-direction: column;
  width: 284px;
  font-family: "Open Sans", sans-serif;
  font-size: 17px;
  line-height: 26px;
  white-space: nowrap;
  color: #b6b6b6;
}
.watermark strong { font-size: 24px; line-height: 34px; font-weight: 400; }

/* Downloads */
.downloads {
  position: relative;
  display: flex;
  align-items: center;
  height: 57px;
  padding-right: 10px;
  border-top: 1px solid #8d6cb4;
  background: #6d41a1;
}
.download {
  display: flex;
  align-items: center;
  width: 237px;
  height: 44px;
  padding: 0 15px 0 20px;
  gap: 13px;
  border-right: 1px solid #9273b8;
  font-size: 12px;
}
.download span { flex: 1; }
.showall {
  width: 78px;
  height: 32px;
  margin: 0 10px 0 auto;
  border: 1px solid #45404c;
  border-radius: 4px;
  font-weight: 600;
  color: #f3d3dc;
}

/* Taskbar */
.taskbar {
  display: grid;
  grid-template-columns: 1fr auto 1fr;
  height: 48px;
  background: linear-gradient(to right, #222226, #242124 8%, #39181f 12%, #30182c 16%, #37191c 23%, #2b2020 30%, #301c1e 42%, #361a1b 50%, #3c1813 68%, #451510 78%, #35242d 83%, #2f2430 88%, #47171b 95%, #481620 97%, #271f1e);
}
.apps { grid-column: 2; display: flex; align-items: center; }
.apps button {
  position: relative;
  width: 40px;
  height: 40px;
  margin: 0 2px;
  display: grid;
  place-items: center;
  border-radius: 4px;
}
.running::after {
  content: "";
  position: absolute;
  left: 17px;
  bottom: 1px;
  width: 6px;
  height: 3px;
  border-radius: 2px;
  background: #a39a9a;
}
.apps .current { background: #4b2723; border: 1px solid #57322e; }
.current::after { left: 11px; bottom: 0; width: 16px; background: #f47c63; }
.badge { position: absolute; right: 3px; top: 3px; width: 16px; height: 16px; }
.tray { display: flex; align-items: center; justify-content: flex-end; padding-right: 19px; }
.tray .lang { margin: 0 18px 0 15px; }
.status { display: flex; gap: 8px; }
.line { fill: none; stroke: #fff; stroke-width: 1.200; }
.clock { margin: 0 9px 0 16px; text-align: right; }
```
